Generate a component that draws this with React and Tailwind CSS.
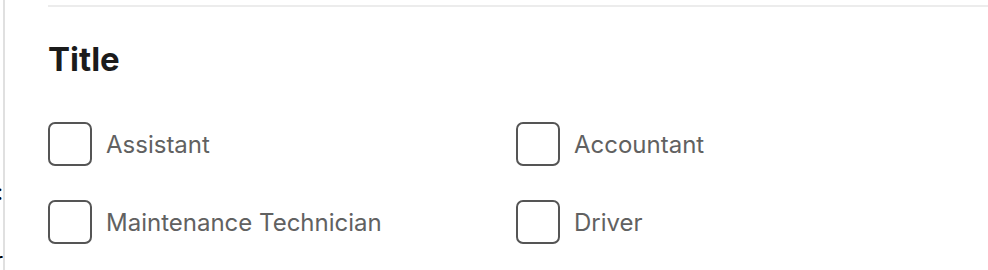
export default function App() {
  const items = ["Assistant", "Accountant", "Maintenance Technician", "Driver"];
  return (
    <div className="w-[988px] h-[270px] bg-white overflow-hidden flex" style={{ fontFamily: "Inter, 'Noto Sans', sans-serif" }}>
      <div className="w-[3px] shrink-0 flex flex-col items-end overflow-hidden">
        <span className="mt-[180px] text-[22px] text-black leading-[24px] whitespace-nowrap">:</span>
        <span className="mt-[44px] text-[22px] text-black leading-[24px] whitespace-nowrap">r</span>
      </div>
      <div className="w-[2px] shrink-0 bg-[#e0e0e0]" />
      <div className="flex-1 pl-[43px]">
        <div className="mt-[5px] h-[2px] bg-[#ececec]" />
        <h2 className="mt-[32px] text-[33px] font-bold text-[#1b1b1b] leading-[40px]">Title</h2>
        <div className="mt-[43px] grid grid-cols-[468px_1fr] gap-y-[34px]">
          {items.map((t) => (
            <label key={t} className="flex items-center gap-[14px]">
              <span className="w-[44px] h-[44px] rounded-[7px] border-2 border-[#555] shrink-0" />
              <span className="text-[24px] text-[#616161] leading-none pt-[2px]">{t}</span>
            </label>
          ))}
        </div>
      </div>
    </div>
  );
}
